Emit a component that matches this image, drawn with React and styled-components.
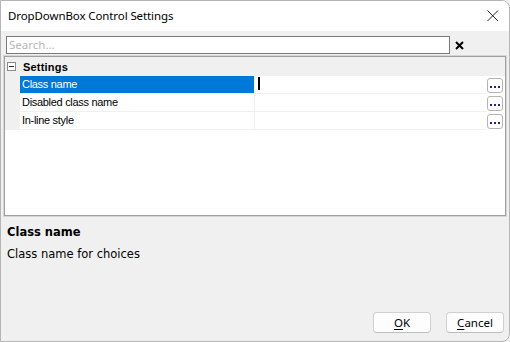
import React from "react";
import styled, { createGlobalStyle } from "styled-components";

const Global = createGlobalStyle`
  html, body { margin: 0; padding: 0; background: #f0f0f0; }
  * { box-sizing: border-box; }
`;

const Window = styled.div`
  width: 510px;
  height: 342px;
  border: 1px solid #b5b5b5;
  border-radius: 0 8px 8px 0;
  background: #f0f0f0;
  display: flex;
  flex-direction: column;
  overflow: hidden;
  font-family: "Noto Sans", "DejaVu Sans", sans-serif;
`;

const TitleBar = styled.div`
  height: 30px;
  flex: none;
  background: #ffffff;
  display: flex;
  align-items: center;
  justify-content: space-between;
  padding: 0 10px 0 7px;
`;

const Title = styled.span`
  font-family: "Noto Sans", sans-serif;
  font-size: 11.5px;
  color: #000;
  letter-spacing: -0.1px;
  padding-bottom: 1px;
`;

const CloseBtn = styled.div`
  width: 12px;
  height: 12px;
  display: flex;
  margin-top: -1px;
`;

const SearchRow = styled.div`
  display: flex;
  align-items: center;
  margin: 5px 0 0 5px;
  height: 18px;
`;

const SearchBox = styled.div`
  width: 444px;
  height: 18px;
  border: 1px solid #7a7a7a;
  background: #fff;
  font-family: "Noto Sans", sans-serif;
  font-size: 11.5px;
  color: #b8b8b8;
  line-height: 15px;
  padding-left: 2px;
`;

const ClearBtn = styled.div`
  width: 9px;
  height: 9px;
  margin-left: 5px;
  margin-top: 1px;
  display: flex;
`;

const Grid = styled.div`
  margin: 2px 3px 0 3px;
  height: 160px;
  border: 1px solid #a0a0a0;
  box-shadow: 0 0 0 1px #d6d6d6;
  background: #fff;
  display: flex;
  flex-direction: column;
  font-family: "Liberation Sans", Arial, sans-serif;
  font-size: 11px;
  letter-spacing: -0.3px;
`;

const CategoryRow = styled.div`
  height: 19px;
  flex: none;
  background: #f0f0f0;
  display: flex;
  align-items: center;
`;

const Expander = styled.div`
  width: 9px;
  height: 9px;
  margin-left: 2px;
  border: 1px solid #8c8c8c;
  background: #fff;
  display: flex;
  align-items: center;
  justify-content: center;
  &::after {
    content: "";
    width: 5px;
    height: 1px;
    background: #1c2a5a;
  }
`;

const CategoryLabel = styled.span`
  font-weight: bold;
  margin-left: 7px;
  letter-spacing: 0.2px;
  color: #000;
`;

const Row = styled.div`
  height: 18px;
  flex: none;
  display: flex;
`;

const Gutter = styled.div`
  width: 15px;
  flex: none;
  background: #f0f0f0;
`;

const NameCell = styled.div`
  width: 235px;
  flex: none;
  border-right: 1px solid #f0f0f0;
  border-bottom: 1px solid #f0f0f0;
  background: ${(p) => (p.$selected ? "#0078d7" : "#fff")};
  color: ${(p) => (p.$selected ? "#fff" : "#000")};
  padding-left: 2px;
  line-height: 17px;
  white-space: nowrap;
`;

const ValueCell = styled.div`
  flex: 1;
  border-bottom: 1px solid #f0f0f0;
  display: flex;
  align-items: center;
  padding-left: 3px;
`;

const Caret = styled.div`
  width: 2px;
  height: 13px;
  background: #000;
  margin-top: -2px;
`;

const ButtonCell = styled.div`
  width: 19px;
  flex: none;
  display: flex;
  align-items: flex-start;
  padding-top: 2px;
  padding-left: 1px;
`;

const EllipsisBtn = styled.div`
  width: 16px;
  height: 15px;
  border: 1px solid #b4b4b4;
  border-radius: 3px;
  background: #fff;
  display: flex;
  align-items: center;
  justify-content: center;
  gap: 2px;
  padding-top: 3px;
`;

const Dot = styled.span`
  width: 2px;
  height: 2px;
  background: #2a1b8a;
`;

const Filler = styled.div`
  flex: 1;
  background: #fff;
`;

const Description = styled.div`
  flex: 1;
  padding: 9px 0 0 6px;
  font-family: "DejaVu Sans", sans-serif;
  font-size: 11.5px;
  color: #000;
`;

const DescTitle = styled.div`
  font-weight: bold;
  line-height: 14px;
`;

const DescText = styled.div`
  line-height: 14px;
  margin-top: 8px;
`;

const Footer = styled.div`
  display: flex;
  justify-content: flex-end;
  gap: 15px;
  padding: 0 5px 8px 0;
`;

const DialogButton = styled.div`
  width: 58px;
  height: 21px;
  border: 1px solid #d0d0d0;
  border-bottom-color: #bdbdbd;
  border-radius: 4px;
  background: #fdfdfd;
  display: flex;
  align-items: center;
  justify-content: center;
  font-family: "Noto Sans", sans-serif;
  font-size: 11.5px;
  color: #000;
  padding-bottom: 1px;
  u { text-decoration: underline; text-underline-offset: 2px; }
`;

const rows = [
  { name: "Class name", selected: true },
  { name: "Disabled class name" },
  { name: "In-line style" },
];

export default function App() {
  return (
    <>
      <Global />
      <Window>
        <TitleBar>
          <Title>DropDownBox Control Settings</Title>
          <CloseBtn>
            <svg width="12" height="12" viewBox="0 0 12 12">
              <path d="M0.5 0.5 L11 11 M11 0.5 L0.5 11" stroke="#222" strokeWidth="1" fill="none" />
            </svg>
          </CloseBtn>
        </TitleBar>
        <SearchRow>
          <SearchBox>Search...</SearchBox>
          <ClearBtn>
            <svg width="9" height="9" viewBox="0 0 9 9">
              <path d="M1 1 L8 8 M8 1 L1 8" stroke="#000" strokeWidth="2" fill="none" />
            </svg>
          </ClearBtn>
        </SearchRow>
        <Grid>
          <CategoryRow>
            <Expander />
            <CategoryLabel>Settings</CategoryLabel>
          </CategoryRow>
          {rows.map((r) => (
            <Row key={r.name}>
              <Gutter />
              <NameCell $selected={r.selected}>{r.name}</NameCell>
              <ValueCell>{r.selected && <Caret />}</ValueCell>
              <ButtonCell>
                <EllipsisBtn>
                  <Dot />
                  <Dot />
                  <Dot />
                </EllipsisBtn>
              </ButtonCell>
            </Row>
          ))}
          <Filler />
        </Grid>
        <Description>
          <DescTitle>Class name</DescTitle>
          <DescText>Class name for choices</DescText>
        </Description>
        <Footer>
          <DialogButton>
            <span><u>O</u>K</span>
          </DialogButton>
          <DialogButton>
            <span><u>C</u>ancel</span>
          </DialogButton>
        </Footer>
      </Window>
    </>
  );
}
